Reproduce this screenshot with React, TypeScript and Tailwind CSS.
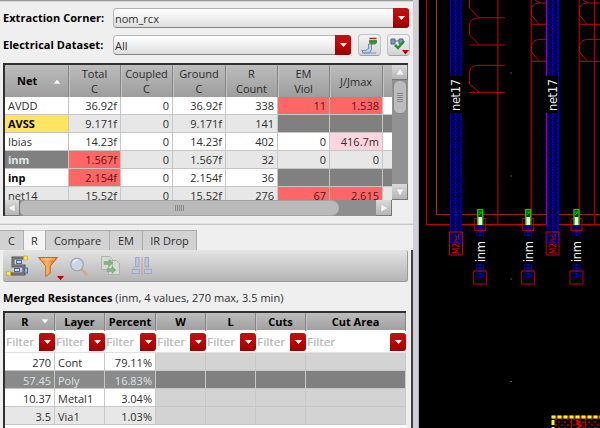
import React from "react";

const NET_COLS = "grid grid-cols-[64px_52px_52px_53px_52px_52px_53px_9px]";
const RES_COLS = "grid grid-cols-[50px_50px_51px_50px_50px_50px_100px]";

type Cell = { text: string; tone?: string };

const headers = [["Total", "C"], ["Coupled", "C"], ["Ground", "C"], ["R", "Count"], ["EM", "Viol"], ["J/Jmax"]];

const RED = "bg-[#ff6666] text-[#571818]";
const DARK = "bg-[#808080]";

const nets: { name: string; nameTone: string; row: string; cells: Cell[] }[] = [
  { name: "AVDD", nameTone: "", row: "bg-white", cells: [{ text: "36.92f" }, { text: "0" }, { text: "36.92f" }, { text: "338" }, { text: "11", tone: RED }, { text: "1.538", tone: RED }, { text: "" }] },
  { name: "AVSS", nameTone: "bg-[#ffe464] font-bold text-black", row: "bg-[#e7e7e7]", cells: [{ text: "9.171f" }, { text: "0" }, { text: "9.171f" }, { text: "141" }, { text: "", tone: DARK }, { text: "", tone: DARK }, { text: "", tone: DARK }] },
  { name: "Ibias", nameTone: "", row: "bg-white", cells: [{ text: "14.23f" }, { text: "0" }, { text: "14.23f" }, { text: "402" }, { text: "0" }, { text: "416.7m", tone: "bg-[#ffd6df]" }, { text: "" }] },
  { name: "inm", nameTone: "bg-[#808080] font-bold text-[#dfeaea]", row: "bg-[#e7e7e7]", cells: [{ text: "1.567f", tone: RED }, { text: "0" }, { text: "1.567f" }, { text: "32" }, { text: "0" }, { text: "0" }, { text: "" }] },
  { name: "inp", nameTone: "font-bold text-black", row: "bg-white", cells: [{ text: "2.154f", tone: RED }, { text: "0" }, { text: "2.154f" }, { text: "36" }, { text: "", tone: DARK }, { text: "", tone: DARK }, { text: "", tone: DARK }] },
  { name: "net14", nameTone: "", row: "bg-[#e7e7e7]", cells: [{ text: "15.52f" }, { text: "0" }, { text: "15.52f" }, { text: "276" }, { text: "67", tone: RED }, { text: "2.615", tone: RED }, { text: "" }] },
];

const resistances = [
  { r: "270", layer: "Cont", pct: "79.11%", row: "bg-white", rest: "bg-[#d3d3d3]" },
  { r: "57.45", layer: "Poly", pct: "16.83%", row: "bg-[#8a8a8a] text-[#dbe6e6]", rest: "bg-[#808080]" },
  { r: "10.37", layer: "Metal1", pct: "3.04%", row: "bg-white", rest: "bg-[#d3d3d3]" },
  { r: "3.5", layer: "Via1", pct: "1.03%", row: "bg-[#e7e7e7]", rest: "bg-[#d3d3d3]" },
];

function DropMark({ className = "" }: { className?: string }) {
  return (
    <div className={`flex shrink-0 items-center justify-center rounded-r-[3px] bg-gradient-to-b from-[#b81414] via-[#c40000] to-[#960000] ${className}`}>
      <svg width="7" height="4" viewBox="0 0 7 4"><path d="M0 0h7L3.5 4z" fill="#fff" /></svg>
    </div>
  );
}

function Combo({ value, className }: { value: string; className: string }) {
  return (
    <div className={`flex h-5 rounded-[4px] border border-r-0 border-[#b4b4b4] border-b-[#858585] bg-gradient-to-b from-white via-[#f0f0f0] to-[#dedede] ${className}`}>
      <span className="flex-1 pl-[1px] leading-[19px]">{value}</span>
      <DropMark className="-my-px w-4" />
    </div>
  );
}

function ToolButton({ children }: { children: React.ReactNode }) {
  return (
    <div className="flex h-[22px] w-[23px] items-center justify-center rounded-[4px] border border-[#c2c2c2] border-b-[#a2a2a2] bg-gradient-to-b from-[#f4f4f4] to-[#d4d4d4]">
      {children}
    </div>
  );
}

function ScrollArrow({ d, className }: { d: string; className: string }) {
  return (
    <div className={`flex items-center justify-center border-b border-r border-[#777] bg-gradient-to-b from-[#dadada] to-[#b5b5b5] ${className}`}>
      <svg width="10" height="10" viewBox="0 0 10 10"><path d={d} fill="#f5f5f5" stroke="#aaa" strokeWidth=".4" /></svg>
    </div>
  );
}

function NetTable() {
  return (
    <div className="ml-[3px] flex h-[153px] w-[405px] border-l-2 border-t-2 border-[#303030]">
      <div className="w-[387px]">
        <div className={`${NET_COLS} h-8 bg-gradient-to-b from-[#bdbdbd] to-[#9d9d9d] text-center text-[#2b2b2b]`}>
          <div className="flex items-center border-r border-[#858585] pl-[12px] font-bold text-black">
            Net
            <svg className="ml-[16px]" width="8" height="5" viewBox="0 0 8 5"><path d="M4 .2 8 5H0z" fill="#f7f7f7" stroke="#888" strokeWidth=".4" /></svg>
          </div>
          {headers.map((h) => (
            <div key={h[0]} className="flex flex-col justify-center border-r border-[#858585] leading-[15px] shadow-[inset_1px_0_#c4c4c4]">
              {h.map((line) => <span key={line}>{line}</span>)}
            </div>
          ))}
          <div className="shadow-[inset_1px_0_#c4c4c4]" />
        </div>
        <div className="h-[103px] overflow-hidden">
          {nets.map((n) => (
            <div key={n.name} className={`${NET_COLS} h-[18px] leading-[18px] ${n.row}`}>
              <div className={`h-[18px] border-b border-r border-[#c6c6c6] pl-[3px] ${n.nameTone}`}>{n.name}</div>
              {n.cells.map((c, i) => (
                <div key={i} className={`h-[18px] border-b border-r border-[#c6c6c6] pr-[3px] text-right last:border-r-0 ${c.tone ?? ""}`}>{c.text}</div>
              ))}
            </div>
          ))}
        </div>
        <div className="flex h-4 bg-[#8e8e8e]">
          <ScrollArrow d="M8 1v8L1 5z" className="w-[15px]" />
          <div className="flex w-[319px] items-center justify-center gap-[1px] rounded-l-[6px] rounded-r-[9px] border-y border-[#a4a4a4] bg-[#bababa]">
            {[0, 1, 2, 3, 4].map((i) => <i key={i} className="h-[6px] w-px bg-[#888]" />)}
          </div>
          <div className="flex-1" />
          <ScrollArrow d="M2 1v8L9 5z" className="w-4" />
        </div>
      </div>
      <div className="flex h-[135px] w-4 flex-col bg-[#929292]">
        <ScrollArrow d="M1 8h8L5 1z" className="h-[15px]" />
        <div className="mx-px flex h-[34px] flex-col items-center justify-center gap-[1px] rounded-[6px] border border-[#8b8b8b] bg-[#bcbcbc]">
          {[0, 1, 2, 3, 4].map((i) => <i key={i} className="h-px w-[6px] bg-[#888]" />)}
        </div>
        <div className="flex-1" />
        <ScrollArrow d="M1 2h8L5 9z" className="h-4" />
      </div>
    </div>
  );
}

function Tabs() {
  const tab = "flex items-center justify-center border-r border-t border-[#adadad] pt-[1px]";
  return (
    <div className="flex h-5 w-[197px] text-[11px]">
      <div className={`${tab} w-6 bg-[#d2d2d2]`}>C</div>
      <div className={`${tab} w-[22px] border-t-[#d0d0d0] bg-[#f4f4f4]`}>R</div>
      <div className={`${tab} w-16 bg-[#d2d2d2]`}>Compare</div>
      <div className={`${tab} w-[33px] bg-[#d2d2d2]`}>EM</div>
      <div className={`${tab} w-[54px] bg-[#d2d2d2]`}>IR Drop</div>
    </div>
  );
}

function Toolbar() {
  return (
    <div className="ml-[3px] h-8 w-[405px] rounded-[3px] border-b border-r border-[#999] bg-gradient-to-b from-[#e4e4e4] to-[#b5b5b5]">
      <svg width="160" height="31" viewBox="3 250 160 31" fill="none">
        <defs>
          <linearGradient id="funnel" x1="0" x2="1">
            <stop offset="0" stopColor="#d97a24" />
            <stop offset=".45" stopColor="#ffb363" />
            <stop offset="1" stopColor="#c8640e" />
          </linearGradient>
        </defs>
        <path d="M24 258H13v8h11v8H11" stroke="#555" strokeWidth="3" />
        <path d="M24 258H13v8h11v8H11" stroke="#999" strokeWidth=".8" />
        <rect x="16.500" y="260.500" width="5" height="3" fill="#c7d8f2" stroke="#4669a5" />
        <rect x="14.500" y="268.500" width="5" height="3" fill="#c7d8f2" stroke="#4669a5" />
        <rect x="24.500" y="268" width="3" height="5" fill="#9bb6e0" stroke="#4669a5" />
        <path d="M23.500 256h4v4h-4zM6.500 271.500h4v4h-4z" fill="#ffec1a" stroke="#b9a51a" strokeWidth=".6" />
        <path d="M38.500 257.500h19l-7.200 8.500v7l-4.600 3.500V266z" fill="url(#funnel)" stroke="#ad5c17" strokeWidth=".8" />
        <path d="M41 259h14" stroke="#ffd09a" strokeWidth=".9" />
        <path d="M57 276h7l-3.500 4.300z" fill="#b80000" />
        <path d="m81.500 269.500 5 5" stroke="#d5a87f" strokeWidth="2.800" strokeLinecap="round" />
        <circle cx="77" cy="264.500" r="6.300" fill="#ccd6e2" stroke="#9da6b0" strokeWidth="1.300" />
        <path d="M73 263a4.500 4.500 0 0 1 5-3" stroke="#edf2f8" strokeWidth="1.300" />
        <g stroke="#a5aaa5" strokeWidth=".8">
          <path d="M101.500 256.500h8l3 3v10h-11zM108.500 260.500h8l3 3v11h-11z" fill="#d5dad3" />
        </g>
        <path d="M104 261.500h5v-2l4 3.500-4 3.500v-2h-5zM107 268.500h5v-2l4 3.500-4 3.500v-2h-5z" fill="#84b584" stroke="#6e9e72" strokeWidth=".4" />
        <g stroke="#9dabc7" fill="#bac6dc" strokeWidth="1">
          <rect x="135.500" y="257.500" width="3.500" height="9" /><rect x="132.500" y="269.500" width="7" height="4" />
          <rect x="145" y="257.500" width="3.500" height="9" /><rect x="144.500" y="269.500" width="7" height="4" />
          <path d="M134 267v2M148 267v2" />
        </g>
        <path d="M142 257v18" stroke="#d69d94" strokeWidth="1.200" />
      </svg>
    </div>
  );
}

function ResTable() {
  const cols = ["R", "Layer", "Percent", "W", "L", "Cuts", "Cut Area"];
  return (
    <div className="ml-[3px] h-[117px] w-[403px] border-l-2 border-t-2 border-[#303030] bg-white">
      <div className={`${RES_COLS} h-[17px] bg-gradient-to-b from-[#bdbdbd] to-[#a0a0a0] text-center font-bold leading-[18px] text-black`}>
        {cols.map((c) => (
          <div key={c} className="flex justify-center whitespace-nowrap border-r border-[#858585] shadow-[inset_1px_0_#c4c4c4]">
            {c}
            {c === "R" && <svg className="ml-[12px] mr-[-11px] mt-[6px]" width="8" height="5" viewBox="0 0 8 5"><path d="M0 0h8L4 5z" fill="#f7f7f7" stroke="#888" strokeWidth=".4" /></svg>}
          </div>
        ))}
      </div>
      <div className={`${RES_COLS} h-[23px] border-b border-[#e2e2e2] pt-[3px]`}>
        {cols.map((c) => (
          <div key={c} className="flex h-[19px] pl-[1px] text-[11.500px] leading-[18px] text-[#bebebe]">
            <span className="flex-1 tracking-[0.200px] [text-shadow:0.300px_0_#bebebe]">Filter</span>
            <DropMark className="h-[18px] w-[16px] rounded-tl-[2px]" />
          </div>
        ))}
      </div>
      {resistances.map((r) => (
        <div key={r.layer} className={`${RES_COLS} h-[18px] leading-[19px] ${r.row}`}>
          <div className="h-[18px] border-b border-r border-[#c8c8c8] pr-[3px] text-right">{r.r}</div>
          <div className="h-[18px] border-b border-r border-[#c8c8c8] pl-[3px]">{r.layer}</div>
          <div className="h-[18px] border-b border-r border-[#c8c8c8] pr-[3px] text-right">{r.pct}</div>
          {[0, 1, 2, 3].map((i) => <div key={i} className={`border-b border-r border-[#c8c8c8] ${r.rest}`} />)}
        </div>
      ))}
    </div>
  );
}

function BlueWire({ x, y, h }: { x: number; y: number; h: number }) {
  return (
    <g>
      <rect x={x} y={y} width="12" height={h} fill="url(#weave)" />
      <path d={`M${x + 0.500} ${y}v${h}M${x + 11} ${y}v${h}`} stroke="#0000c4" strokeWidth="1.200" />
      <path d={`M${x + 5.700} ${y}v${h}`} stroke="#0000f0" strokeWidth="1.400" strokeDasharray="2 .8" />
    </g>
  );
}

function Contact({ x }: { x: number }) {
  return (
    <g transform={`translate(${x} 0)`}>
      <rect x="-5.500" y="218.500" width="11" height="12" stroke="#c00000" fill="none" />
      <path d="M-3.500 225v12M3.500 225v12M-3.500 264v13M3.500 264v13" stroke="#0000c8" />
      <path d="M0 225v12M0 264v13" stroke="#0000e8" strokeWidth="2.500" strokeDasharray="2 1" />
      <rect x="-2.500" y="209.500" width="5" height="15" stroke="#00d400" strokeWidth="1.300" fill="#064400" />
      <path d="m-1.500 215 3-3M-1.500 212h3" stroke="#00d000" />
      <rect x="-1.800" y="217" width="3.600" height="8" fill="#fffbe0" />
      <rect x="-6.500" y="271" width="13" height="13" stroke="#c00000" fill="none" />
      <path d="M-3 277h6" stroke="#0000c8" />
      <text transform="translate(4.500 262) rotate(-90)" fill="#eee" fontSize="11.500" textLength="21">inm</text>
    </g>
  );
}

function Fingers({ x }: { x: number }) {
  return (
    <g transform={`translate(${x} 0)`} stroke="#c40000" fill="none">
      <path d="M4 0 9 3H28M9 3C3 3 .5 6 .5 10v5L8 24M0 24.300H28M28 39.300H10C3 39.300.5 43 .5 47v5L8 61M0 61.300H28" />
    </g>
  );
}

function LayoutCanvas() {
  return (
    <svg className="shrink-0 bg-black" width="181" height="428" viewBox="419 0 181 428" fontFamily="DejaVu Sans, sans-serif">
      <defs>
        <pattern id="weave" width="4" height="4" patternUnits="userSpaceOnUse">
          <rect width="4" height="4" fill="#00001c" />
          <path d="M0 0h1.500v1.500H0zM2 2h1.500v1.500H2z" fill="#000096" />
        </pattern>
        <pattern id="redDots" width="6" height="6" patternUnits="userSpaceOnUse">
          <path d="M0 1h2v2H0zM3 4h2v2H3z" fill="#850000" />
        </pattern>
      </defs>
      <g fill="none">
        <path d="M426.500 0V224.700H600" stroke="#bd0000" strokeWidth="1.200" />
        <path d="M436.500 0V214.700H600" stroke="#a93418" />
        <path d="M497.900 0V225M531.200 0V225M579.200 0V225M594.400 0V225" stroke="#a80000" strokeWidth="1.300" />
        <path d="M469.500 0V8L479 17.800H505M479 18C472 18 469.500 21 469.500 26V35L479 44.500M469.500 45H505M505 65.300H479C472 65.300 469.500 69 469.500 73V84L479 92M469.500 92.300H505" stroke="#c40000" />
      </g>
      <Fingers x={531} />
      <Fingers x={579} />
      <BlueWire x={450} y={0} h={76} />
      <BlueWire x={450} y={113} h={130} />
      <BlueWire x={547} y={0} h={76} />
      <BlueWire x={547} y={113} h={130} />
      <path d="M558.500 0V243" stroke="#0000cc" strokeWidth="1.200" />
      <path d="M546.300 0V76M546.300 113V225" stroke="#a00070" strokeWidth="1.300" />
      {[456, 552.600].map((x) => (
        <g key={x}>
          <text transform={`translate(${x + 4} 111) rotate(-90)`} fill="#eee" fontSize="11.500" textLength="32">net17</text>
          <path d={`M${x - 5} 243h10`} stroke="#0000cc" />
          <rect x={x - 6.500} y="232" width="13" height="23" fill="none" stroke="#c40000" />
          <path d={`M${x - 2.500} 236h3v4h-3M${x - 2.500} 242h5M${x + 2.500} 234v6`} stroke="#a00028" fill="none" />
          <text transform={`translate(${x + 3} 254) rotate(-90)`} fill="#f00000" fontSize="8" textLength="11" lengthAdjust="spacingAndGlyphs">M2</text>
        </g>
      ))}
      {[480.200, 528.200, 576.500].map((x) => <Contact key={x} x={x} />)}
      {[73, 176, 279, 381.500].map((y) => <rect key={y} x="510" y={y - 0.500} width="2" height="1" fill="#555" />)}
      <rect x="553" y="417" width="47" height="11" fill="url(#redDots)" />
      <path d="M551.500 417H600" stroke="#8b1600" strokeWidth="3" />
      <path d="M551.500 417H600" stroke="#ffff00" strokeWidth="3" strokeDasharray="4 2" />
      <path d="M553 420v8" stroke="#ffff00" strokeWidth="3" strokeDasharray="5 2" />
      <path d="M571.500 419v9M585.500 419v9" stroke="#c40000" />
      <path d="m576 420 4 2-3 2 4 2-4 2" stroke="#f00000" strokeWidth="1.500" fill="none" />
    </svg>
  );
}

export default function App() {
  return (
    <div className="flex h-[428px] w-[600px] overflow-hidden bg-[#efefef] font-['Open_Sans','Noto_Sans',sans-serif] text-[11px] text-[#2e2e2e]">
      <div className="flex h-full w-[413px] shrink-0 flex-col">
        <div className="h-[2px] shrink-0 border-b border-[#d5d5d5] bg-[#999]" />
        <div className="mt-[6px] flex h-5 shrink-0 items-center pl-[3px]">
          <b className="w-[110px] whitespace-nowrap tracking-[0.050px] text-black">Extraction Corner:</b>
          <Combo value="nom_rcx" className="w-[296px]" />
        </div>
        <div className="mt-[6px] flex h-[22px] shrink-0 items-center pl-[3px]">
          <b className="w-[110px] whitespace-nowrap tracking-[0.050px] text-black">Electrical Dataset:</b>
          <Combo value="All" className="w-[238px]" />
          <div className="ml-[7px] flex gap-[6px]">
            <ToolButton>
              <svg width="19" height="19" viewBox="0 0 19 19">
                <path d="M8.500 8h3v5.500l-2 3.500H4l-2.500-2.500h4l3-2z" fill="#b8d2f1" stroke="#5879a3" strokeWidth=".8" />
                <path d="M2 17h14" stroke="#7f9fcf" strokeWidth="1.200" />
                <path d="M9 4h8v3l-2 1.500h-4L9 7z" fill="#4d8e38" />
                <path d="M9.500 2.500h7" stroke="#a72d27" strokeWidth="1.500" />
                <path d="M10.500 5.500h5" stroke="#b6463b" />
              </svg>
            </ToolButton>
            <ToolButton>
              <svg width="21" height="20" viewBox="0 0 21 20">
                <path d="M3 4h4v5H3zM11 4h4v5h-4zM7 6h4" fill="#8197bb" stroke="#536783" strokeWidth="1" />
                <path d="m7 10 3 3 6-7" fill="none" stroke="#21962b" strokeWidth="2.500" />
                <path d="M14 15h7l-3.500 4.500z" fill="#b80000" />
              </svg>
            </ToolButton>
          </div>
        </div>
        <div className="mt-[7px] shrink-0"><NetTable /></div>
        <div className="mt-[7px] h-[2px] shrink-0 border-t border-[#e0e0e0] bg-[#c6c6c6]" />
        <div className="mt-[5px] flex shrink-0"><Tabs /></div>
        <div className="flex h-[178px] shrink-0 justify-between">
          <div className="w-[408px]">
            <Toolbar />
            <p className="mt-[8px] h-4 whitespace-nowrap pl-[3px] leading-4 tracking-[0.040px]"><b className="text-black">Merged Resistances</b> (inm, 4 values, 270 max, 3.5 min)</p>
            <div className="mt-[5px]"><ResTable /></div>
          </div>
          <div className="w-[2px] bg-[#404040]" />
        </div>
      </div>
      <div className="w-[6px] shrink-0 border-r border-[#aeb0b8] bg-[#cfd0d6]" />
      <LayoutCanvas />
    </div>
  );
}
